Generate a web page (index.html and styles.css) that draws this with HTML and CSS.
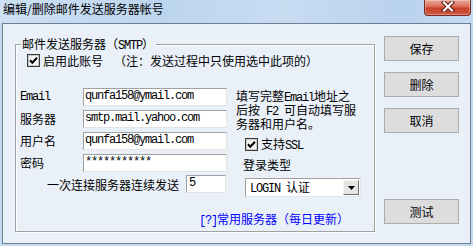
FILE: index.html
```html
<!DOCTYPE html>
<html lang="zh-CN">
<head>
<meta charset="utf-8">
<title>编辑/删除邮件发送服务器帐号</title>
<link rel="stylesheet" href="styles.css">
</head>
<body>
<div class="window">
  <div class="titlebar">
    <span class="title">编辑/删除邮件发送服务器帐号</span>
    <div class="close">
      <svg width="14" height="11" viewBox="0 0 14 11"><path d="M3 1.5 L11 9.5 M11 1.5 L3 9.5" stroke="#5b1a10" stroke-width="4.2" stroke-linecap="square" fill="none"/><path d="M3 1.5 L11 9.5 M11 1.5 L3 9.5" stroke="#ffffff" stroke-width="2.2" stroke-linecap="square" fill="none"/></svg>
    </div>
  </div>
  <div class="client">
    <div class="group">
      <span class="legend">邮件发送服务器（<span class="en">SMTP</span>）</span>
      <div class="check-row enable">
        <svg class="cb" width="13" height="13" viewBox="0 0 13 13"><rect x="0.5" y="0.5" width="12" height="12" fill="#f4f4f4" stroke="#3a3a3a"/><rect x="1.5" y="1.5" width="10" height="10" fill="none" stroke="#c8c8c8"/><path d="M3 6.3 L5.3 8.8 L10 3.8" fill="none" stroke="#000" stroke-width="2"/></svg>
        <span>启用此账号</span>
        <span class="note">（注：发送过程中只使用选中此项的）</span>
      </div>
      <div class="form">
        <div class="fields">
          <span class="label en">Email</span>
          <div class="field en">qunfa158@ymail.com</div>
          <span class="label">服务器</span>
          <div class="field en">smtp.mail.yahoo.com</div>
          <span class="label">用户名</span>
          <div class="field en">qunfa158@ymail.com</div>
          <span class="label">密码</span>
          <div class="field en">***********</div>
          <div class="batch">
            <span class="batch-label">一次连接服务器连续发送</span>
            <div class="field small en">5</div>
          </div>
        </div>
        <div class="side">
          <p class="hint">填写完整<span class="en">Email</span>地址之<br>后按<span class="en"> F2 </span>可自动填写服<br>务器和用户名。</p>
          <div class="check-row ssl">
            <svg class="cb" width="13" height="13" viewBox="0 0 13 13"><rect x="0.5" y="0.5" width="12" height="12" fill="#f4f4f4" stroke="#3a3a3a"/><rect x="1.5" y="1.5" width="10" height="10" fill="none" stroke="#c8c8c8"/><path d="M3 6.3 L5.3 8.8 L10 3.8" fill="none" stroke="#000" stroke-width="2"/></svg>
            <span>支持<span class="en">SSL</span></span>
          </div>
          <div class="login-label">登录类型</div>
          <div class="select">
            <span class="select-text"><span class="en">LOGIN </span>认证</span>
            <span class="arrow"><svg width="7" height="4" viewBox="0 0 7 4"><path d="M0 0 H7 L3.5 4 Z" fill="#000"/></svg></span>
          </div>
        </div>
      </div>
      <div class="link-row"><a class="link"><span class="en">[?]</span>常用服务器（每日更新）</a></div>
    </div>
    <div class="buttons">
      <button class="btn">保存</button>
      <button class="btn">删除</button>
      <button class="btn">取消</button>
      <button class="btn test">测试</button>
    </div>
  </div>
</div>
</body>
</html>
```

FILE: styles.css
```css
html, body {
  margin: 0;
  padding: 0;
}

body {
  width: 473px;
  height: 246px;
  overflow: hidden;
  background: #c3d9f0;
  font-family: "Noto Sans CJK SC", sans-serif;
  font-size: 12px;
  color: #000;
}

.window {
  display: flex;
  flex-direction: column;
  height: 246px;
}

.titlebar {
  height: 23px;
  display: flex;
  align-items: flex-start;
  background: linear-gradient(90deg, #cde0f4 0%, #bcd5ef 35%, #c8dcf2 60%, #b9d2ee 85%, #c6dbf1 100%);
}

.title {
  padding: 3px 0 0 3px;
  line-height: 12px;
}

.close {
  margin-left: auto;
  margin-right: 2px;
  width: 47px;
  height: 16px;
  box-sizing: border-box;
  border: 1px solid #7a281d;
  border-top: none;
  border-radius: 0 0 4px 4px;
  background: linear-gradient(#eba595 0%, #dd7460 40%, #c8412a 55%, #cc5a43 100%);
  box-shadow: inset 0 0 0 1px rgba(255, 255, 255, 0.3);
  display: flex;
  justify-content: center;
  align-items: flex-start;
}

.close svg {
  display: block;
  margin-top: 1px;
}

.client {
  margin-left: 2px;
  width: 469px;
  height: 221px;
  box-sizing: border-box;
  border: 1px solid #6e7d90;
  background: #eaf0f8;
  display: flex;
  align-items: flex-start;
}

.group {
  position: relative;
  margin: 20px 0 0 12px;
  width: 360px;
  height: 188px;
  box-sizing: border-box;
  border: 1px solid #a0a0a0;
  box-shadow: 1px 1px 0 #ffffff, inset 1px 1px 0 #ffffff;
  padding: 9px 0 0 4px;
}

.legend {
  position: absolute;
  top: -7px;
  left: 5px;
  padding: 0 2px 0 1px;
  background: #eaf0f8;
  line-height: 12px;
  white-space: nowrap;
}

.en {
  font-family: "Liberation Mono", monospace;
  font-size: 12px;
  letter-spacing: -1.2px;
}

.check-row {
  display: flex;
  align-items: center;
  height: 13px;
  line-height: 13px;
  white-space: nowrap;
}

.enable {
  margin-left: 7px;
}

.cb {
  display: block;
  flex: none;
  margin-right: 3px;
}

.note {
  margin-left: 11px;
}

.form {
  display: flex;
  align-items: flex-start;
  margin-top: 21px;
}

.fields {
  display: grid;
  grid-template-columns: 63px 144px;
  grid-template-rows: repeat(5, 18px);
  row-gap: 4px;
}

.label {
  align-self: center;
  line-height: 12px;
  white-space: nowrap;
}

.field {
  height: 18px;
  box-sizing: border-box;
  border: 1px solid;
  border-color: #a0a0a0 #e3e3e3 #e3e3e3 #a0a0a0;
  background: #fff;
  padding: 0 1px;
  line-height: 14px;
  white-space: nowrap;
  overflow: hidden;
}

.batch {
  grid-column: 1 / 3;
  display: flex;
  justify-content: flex-end;
  align-items: flex-start;
  margin-top: -1px;
}

.batch-label {
  line-height: 12px;
  margin: 4px 7px 0 0;
  white-space: nowrap;
}

.field.small {
  width: 40px;
  margin-right: 1px;
  padding-left: 2px;
}

.side {
  margin-left: 9px;
  display: flex;
  flex-direction: column;
  align-items: flex-start;
}

.hint {
  margin: 2px 0 0 0;
  line-height: 11px;
  white-space: nowrap;
}

.ssl {
  margin: 9px 0 0 9px;
}

.login-label {
  margin: 8px 0 0 7px;
  line-height: 12px;
}

.select {
  margin: 7px 0 0 9px;
  width: 116px;
  height: 19px;
  box-sizing: border-box;
  border: 1px solid;
  border-color: #a0a0a0 #e3e3e3 #e3e3e3 #a0a0a0;
  background: #fff;
  display: flex;
  align-items: center;
  padding-left: 4px;
}

.select-text {
  line-height: 12px;
  white-space: nowrap;
}

.arrow {
  margin-left: auto;
  margin-right: 1px;
  width: 16px;
  height: 15px;
  box-sizing: border-box;
  border: 1px solid;
  border-color: #f4f4f4 #6f6f6f #6f6f6f #f4f4f4;
  background: #e4e4e4;
  display: flex;
  align-items: center;
  justify-content: center;
}

.arrow svg {
  display: block;
}

.link-row {
  margin-top: 16px;
  padding-left: 179px;
  line-height: 12px;
}

.link {
  color: #0000ff;
  text-decoration: none;
  white-space: nowrap;
}

.buttons {
  margin: 12px 0 0 9px;
  display: flex;
  flex-direction: column;
  width: 75px;
}

.btn {
  height: 25px;
  box-sizing: border-box;
  margin: 0 0 11px 0;
  padding: 0;
  border: 1px solid #acacac;
  background: #dddddd;
  font-family: "Noto Sans CJK SC", sans-serif;
  font-size: 12px;
  color: #000;
  display: flex;
  align-items: center;
  justify-content: center;
}

.btn.test {
  margin-top: 55px;
}
```
